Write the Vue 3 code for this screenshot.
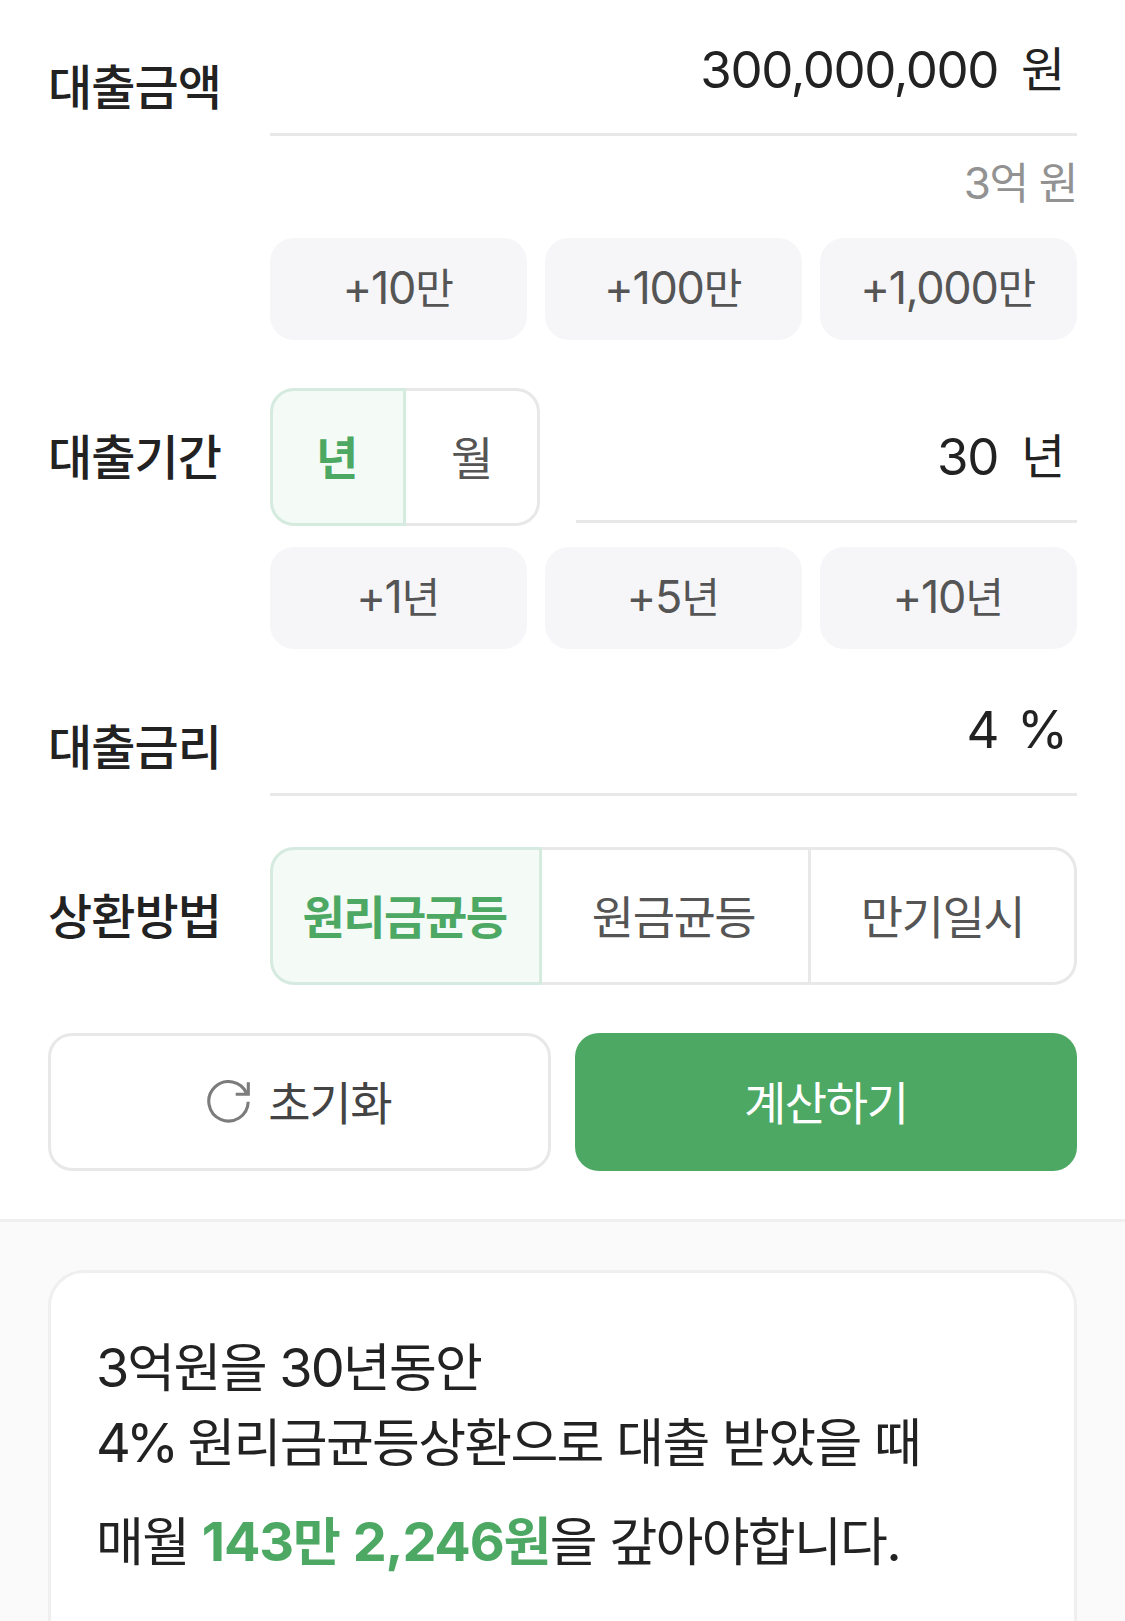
<script setup>
import { ref } from 'vue'

const amount = ref(300000000)
const period = ref(30)
const rate = ref(4)
const unit = ref('년')
const method = ref('원리금균등')

const amountSteps = [
  { num: '+10', text: '만', value: 100000 },
  { num: '+100', text: '만', value: 1000000 },
  { num: '+1,000', text: '만', value: 10000000 },
]
const periodSteps = [1, 5, 10]
const units = ['년', '월']
const methods = ['원리금균등', '원금균등', '만기일시']

const reset = () => {
  amount.value = 0
  period.value = 0
  rate.value = 0
}
</script>

<template>
  <main class="calculator">
    <section class="form">
      <!-- 대출금액 -->
      <div class="row">
        <div class="label">대출금액</div>
        <div class="content">
          <div class="field">
            <span class="num">{{ amount.toLocaleString('en-US') }}</span>
            <span class="unit">원</span>
          </div>
          <p class="hint"><span class="num">3</span>억 원</p>
          <div class="chips">
            <button v-for="s in amountSteps" :key="s.num" class="chip" @click="amount += s.value">
              <span class="num">{{ s.num }}</span>{{ s.text }}
            </button>
          </div>
        </div>
      </div>

      <!-- 대출기간 -->
      <div class="row">
        <div class="label label-tall">대출기간</div>
        <div class="content">
          <div class="period">
            <div class="segment segment-unit">
              <button
                v-for="u in units"
                :key="u"
                class="segment-item"
                :class="{ active: unit === u }"
                @click="unit = u"
              >{{ u }}</button>
            </div>
            <div class="field">
              <span class="num">{{ period }}</span>
              <span class="unit">{{ unit }}</span>
            </div>
          </div>
          <div class="chips">
            <button v-for="s in periodSteps" :key="s" class="chip" @click="period += s">
              <span class="num">+{{ s }}</span>년
            </button>
          </div>
        </div>
      </div>

      <!-- 대출금리 -->
      <div class="row row-rate">
        <div class="label">대출금리</div>
        <div class="content">
          <div class="field">
            <span class="num">{{ rate }}</span>
            <span class="percent num">%</span>
          </div>
        </div>
      </div>

      <!-- 상환방법 -->
      <div class="row">
        <div class="label label-tall">상환방법</div>
        <div class="segment">
          <button
            v-for="m in methods"
            :key="m"
            class="segment-item"
            :class="{ active: method === m }"
            @click="method = m"
          >{{ m }}</button>
        </div>
      </div>

      <div class="actions">
        <button class="btn btn-reset" @click="reset">
          <svg class="icon" viewBox="0 0 44 44" fill="none" stroke="#7c7c7c" stroke-width="3.1">
            <path d="M41.2 21.8A19.7 19.7 0 1 1 39.8 14" />
            <path d="M41.3 2.3V14.3H28.7" />
          </svg>
          <span>초기화</span>
        </button>
        <button class="btn btn-submit">계산하기</button>
      </div>
    </section>

    <section class="result">
      <div class="card">
        <p><span class="num">3</span>억원을 <span class="num">30</span>년동안</p>
        <p><span class="num rate">4%</span> 원리금균등상환으로 대출 받았을 때</p>
        <p class="monthly">
          매월 <strong><span class="num">143</span>만 <span class="num">2,246</span>원</strong>을 갚아야합니다<span class="num">.</span>
        </p>
      </div>
    </section>
  </main>
</template>

<style>
body {
  margin: 0;
  background: #fff;
}
</style>

<style scoped>
.calculator {
  height: 1621px;
  overflow: hidden;
  display: flex;
  flex-direction: column;
  color: #222;
  font-family: "Noto Sans CJK KR", sans-serif;
}
.calculator * {
  box-sizing: border-box;
}
p {
  margin: 0;
}
button {
  padding: 0;
  border: 0;
  font-family: inherit;
  cursor: pointer;
}
.num {
  font-family: Inter, "Noto Sans CJK KR", sans-serif;
  line-height: 0;
}

.form {
  display: flex;
  flex-direction: column;
  gap: 48px;
  padding: 37px 48px 48px;
  border-bottom: 3px solid #efefef;
}
.row {
  display: grid;
  grid-template-columns: 222px 1fr;
  align-items: start;
}
.row-rate {
  margin-bottom: 3px;
}
.label {
  height: 99px;
  line-height: 95px;
  font-size: 48px;
  font-weight: 500;
  letter-spacing: -0.9px;
  white-space: nowrap;
}
.label-tall {
  height: 138px;
  line-height: 132px;
}

.field {
  display: flex;
  justify-content: flex-end;
  gap: 23px;
  height: 99px;
  padding-right: 12px;
  border-bottom: 3px solid #e8e8e8;
  font-size: 48px;
}
.field .num {
  font-size: 51px;
  line-height: 66px;
  letter-spacing: -1.4px;
}
.field .unit {
  width: 44px;
  line-height: 59px;
}
.field .percent {
  width: 44px;
  font-size: 52px;
  text-indent: -4px;
}
.hint {
  height: 93px;
  margin-bottom: 9px;
  color: #929292;
  font-size: 43px;
  line-height: 89px;
  letter-spacing: -1.4px;
  word-spacing: 3px;
  text-align: right;
}
.hint .num {
  font-size: 44px;
}

.chips {
  display: grid;
  grid-template-columns: repeat(3, 1fr);
  gap: 18px;
}
.chip {
  height: 102px;
  padding: 0 2px 7px 0;
  border-radius: 24px;
  background: #f6f6f9;
  color: #555;
  font-size: 42px;
  letter-spacing: -1.4px;
}
.chip .num {
  font-size: 45px;
  letter-spacing: -1.3px;
}

.period {
  display: grid;
  grid-template-columns: 270px 1fr;
  column-gap: 36px;
  margin-bottom: 21px;
}
.period .field {
  margin-top: 36px;
}
.segment {
  display: flex;
  height: 138px;
}
.segment-item {
  flex: 0 0 272px;
  padding: 0 3px 4px 0;
  border: 3px solid #e8e8e8;
  background: #fff;
  color: #555;
  font-size: 46px;
  letter-spacing: -1.5px;
}
.segment-unit .segment-item {
  flex-basis: 136px;
}
.segment-item + .segment-item {
  margin-left: -3px;
}
.segment-item:first-child {
  border-radius: 24px 0 0 24px;
}
.segment .segment-item:last-child {
  flex: 1;
  padding-right: 0;
  border-radius: 0 24px 24px 0;
}
.segment-item.active {
  z-index: 1;
  border-color: #d5ebdf;
  background: #f4faf6;
  color: #4da863;
  font-weight: 700;
}

.actions {
  display: grid;
  grid-template-columns: 1fr 1fr;
  gap: 24px;
}
.btn {
  display: flex;
  align-items: center;
  justify-content: center;
  height: 138px;
  border-radius: 24px;
  font-size: 46px;
  letter-spacing: -1.4px;
}
.btn-reset {
  gap: 17px;
  border: 3px solid #e8e8e8;
  background: #fff;
  color: #444;
}
.btn-reset span {
  padding-bottom: 4px;
}
.btn-submit {
  padding-bottom: 4px;
  background: #4da863;
  color: #fff;
}
.icon {
  width: 44px;
  height: 44px;
}

.result {
  flex: 1;
  padding: 48px 48px 0;
  background: #fafafa;
}
.card {
  height: 420px;
  padding: 54px 45px;
  border: 3px solid #efeff0;
  border-radius: 36px;
  background: #fff;
  font-size: 52px;
  line-height: 75px;
  letter-spacing: -1.7px;
  word-spacing: 3.6px;
  white-space: nowrap;
}
.card .num {
  font-size: 54px;
  letter-spacing: -2px;
}
.card .rate {
  letter-spacing: -5px;
}
.card .monthly {
  margin-top: 24px;
}
.monthly strong {
  color: #4da863;
  font-weight: 700;
}
.monthly strong .num {
  letter-spacing: -1.2px;
}
</style>
